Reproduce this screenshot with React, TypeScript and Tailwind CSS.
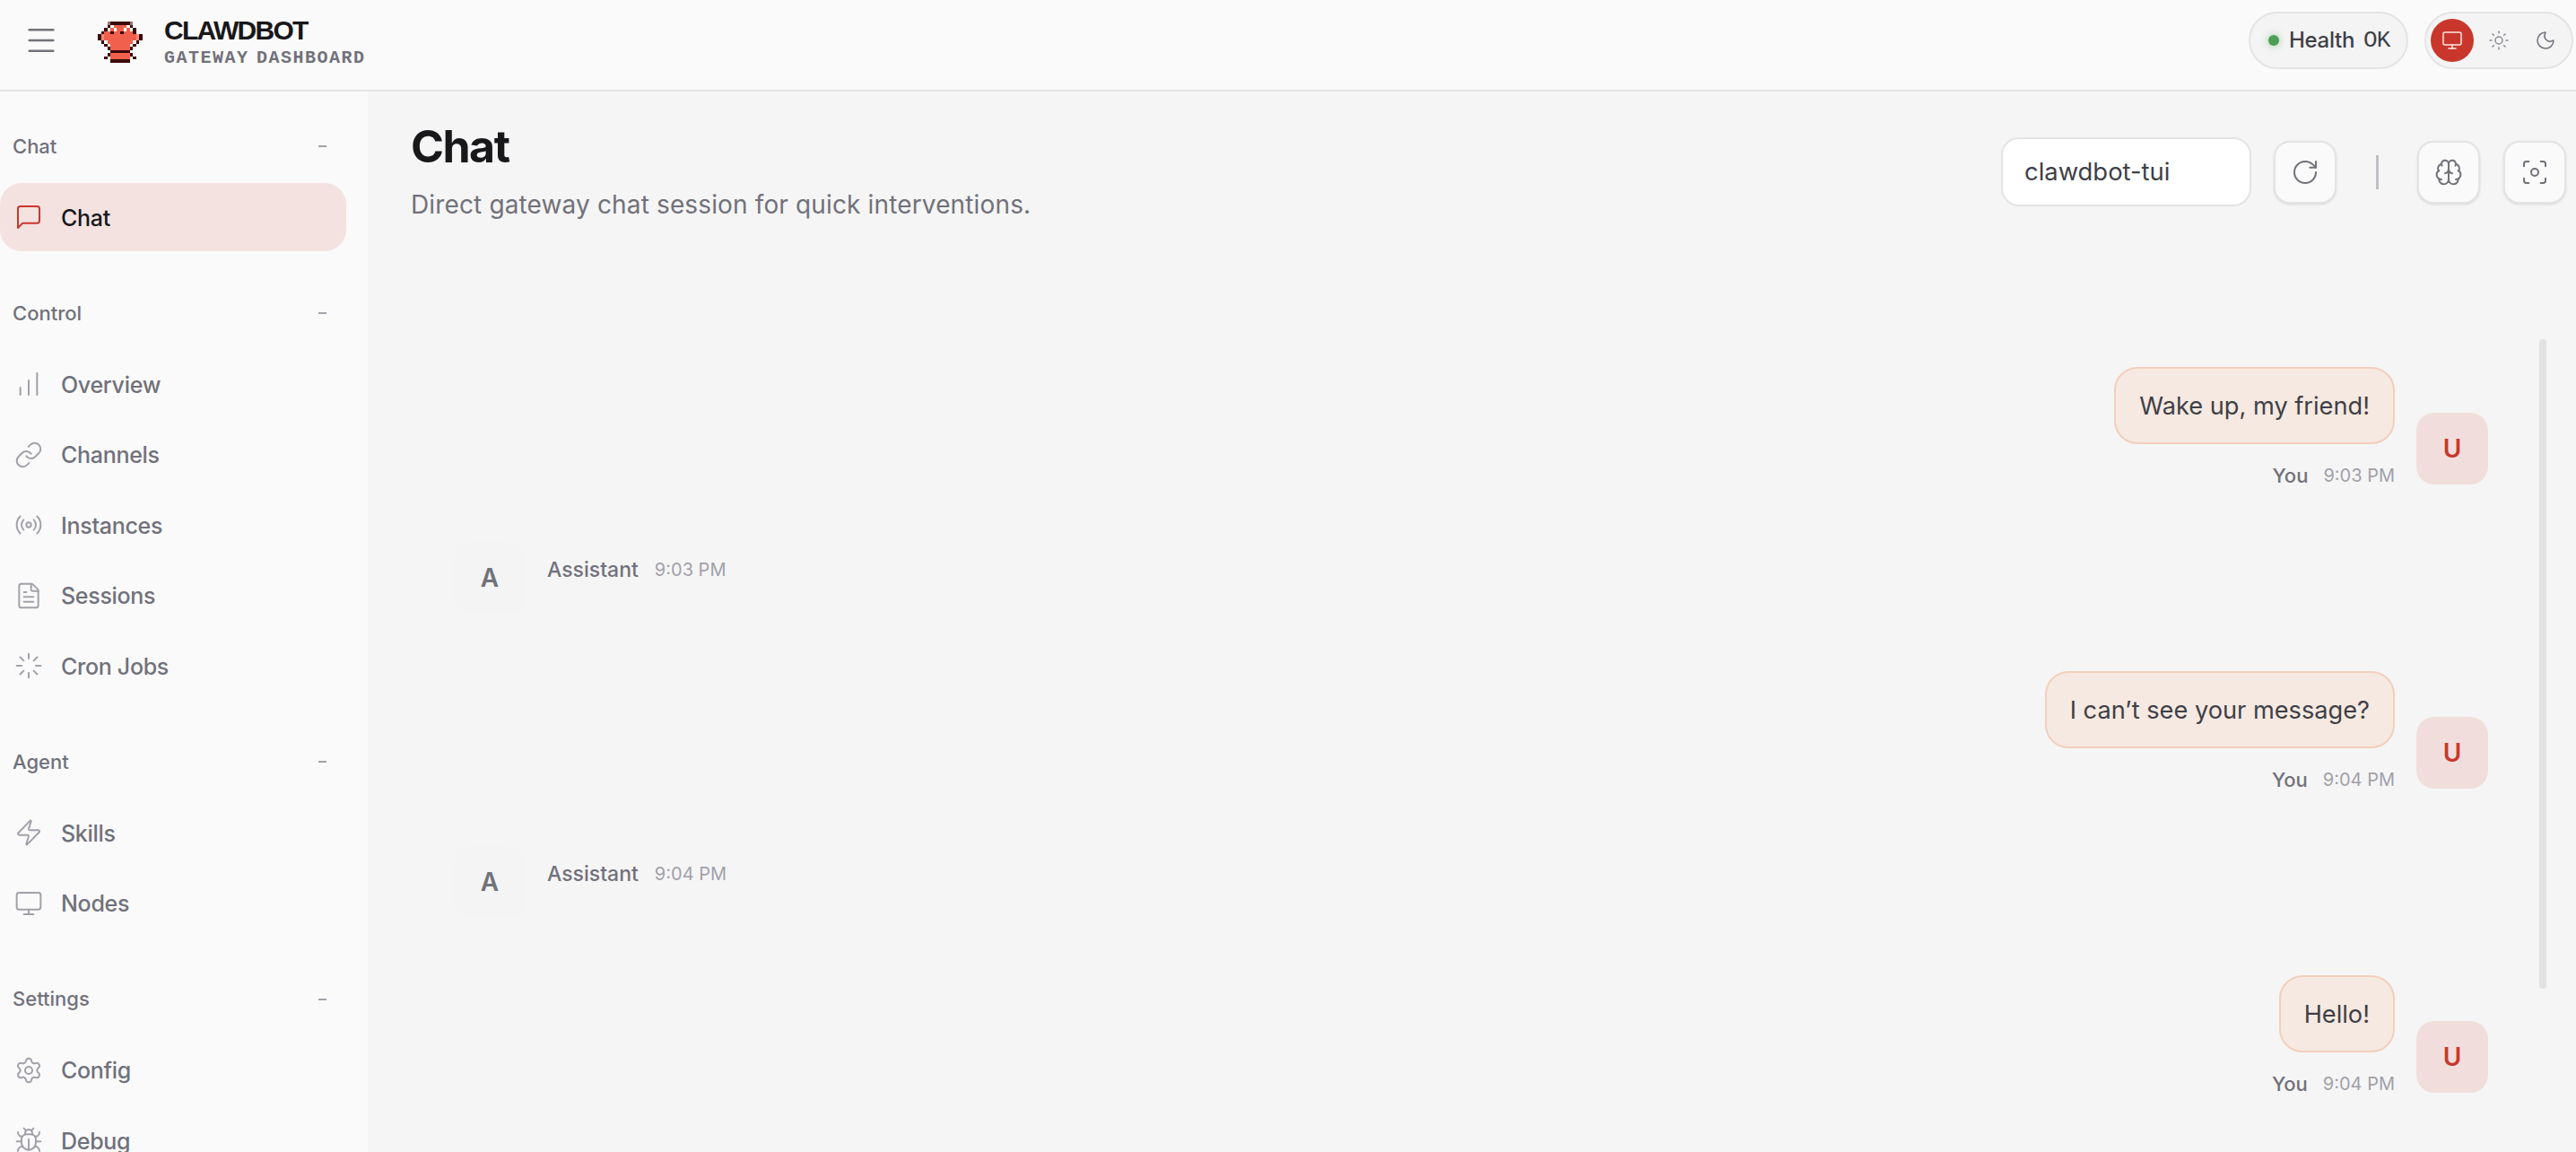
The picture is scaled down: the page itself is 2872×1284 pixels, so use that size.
import React from 'react';
import { Menu, Monitor, Sun, Moon, RotateCw, Brain, Focus, ChartNoAxesColumnIncreasing, Link, Radio, FileText, Loader, Zap, Settings, Bug } from 'lucide-react';

const GRID = [
  '...gddddddg...',
  '...dwccccwd...',
  '..dwcwccwcwd..',
  '.dccdccdcccd..',
  'dlccccccccccld',
  'dlccccccccccld',
  '.dwccccccccwd.',
  '..dwccccccwd..',
  '...dccccccd...',
  '....dddddd....',
  '...dccccccd...',
  '..dwccccccwd..',
  '....dddddd....',
];
const COLORS: Record<string, string> = { d: '#3a0a0a', c: '#f0604c', l: '#f58a76', w: '#ffffff', g: '#9a7a78' };

function Logo() {
  return (
    <svg width="50" height="46" viewBox="0 0 14 13" shapeRendering="crispEdges" className="shrink-0">
      {GRID.flatMap((row, y) =>
        row.split('').map((ch, x) =>
          ch === '.' ? null : <rect key={`${x}-${y}`} x={x} y={y} width="1" height="1" fill={COLORS[ch]} />
        )
      )}
    </svg>
  );
}

function OldChat() {
  return (
    <svg width="32" height="32" viewBox="0 0 24 24" fill="none" stroke="#c9372c" strokeWidth="1.5" strokeLinecap="round" strokeLinejoin="round" className="shrink-0">
      <path d="M21 15a2 2 0 0 1-2 2H7l-4 4V5a2 2 0 0 1 2-2h14a2 2 0 0 1 2 2z" />
    </svg>
  );
}

function Group({ label, children }: { label: string; children: React.ReactNode }) {
  return (
    <div className="flex flex-col">
      <div className="mb-[25px] flex h-8 items-center justify-between pl-[14px] pr-[46px] text-[22px] font-medium text-[#71717a]">
        <span>{label}</span>
        <span className="block h-[2px] w-[9px] bg-[#a1a1aa]" />
      </div>
      <div className="flex flex-col gap-[2.5px]">{children}</div>
    </div>
  );
}

function Item({ icon: Icon, label }: { icon: React.ComponentType<any>; label: string }) {
  return (
    <div className="flex h-[76px] w-[386px] shrink-0 items-center gap-5 pl-4 text-[25px] font-medium tracking-[-0.3px] text-[#71717a]">
      <Icon size={32} strokeWidth={1.5} className="shrink-0 text-[#a1a1aa]" />
      <span className="pt-[3px]">{label}</span>
    </div>
  );
}

function UserMsg({ text, time }: { text: string; time: string }) {
  return (
    <div className="flex items-end justify-end gap-6">
      <div className="flex flex-col items-end">
        <div className="flex h-[86px] items-center rounded-[26px] border-2 border-[#f3cfbc] bg-[#f5e9e1] px-[26px] pt-[2px] text-[27.2px] text-[#3f3f46]">
          {text}
        </div>
        <div className="mt-[25px] flex h-5 items-center gap-[17px]">
          <span className="text-[22px] font-medium text-[#71717a]">You</span>
          <span className="text-[20px] text-[#a1a1aa]">{time}</span>
        </div>
      </div>
      <div className="flex h-20 w-20 items-center justify-center rounded-[20px] bg-[#f1dedc] text-[28px] font-semibold text-[#c9372c]">U</div>
    </div>
  );
}

function BotMsg({ time }: { time: string }) {
  return (
    <div className="flex items-start gap-6">
      <div className="flex h-20 w-20 items-center justify-center rounded-[20px] bg-[#f4f4f4] text-[28px] font-semibold text-[#71717a]">A</div>
      <div className="mt-[21px] flex h-5 items-center gap-[18px]">
        <span className="text-[23px] font-medium text-[#71717a]">Assistant</span>
        <span className="text-[20px] text-[#a1a1aa]">{time}</span>
      </div>
    </div>
  );
}

function IconBtn({ icon: Icon }: { icon: React.ComponentType<any> }) {
  return (
    <button className="flex h-[70px] w-[70px] items-center justify-center rounded-[18px] border-2 border-[#e4e4e7] bg-[#fafafa] text-[#71717a] shadow-sm">
      <Icon size={32} strokeWidth={1.5} />
    </button>
  );
}

export default function App() {
  return (
    <div className="flex h-screen w-screen flex-col overflow-hidden bg-[#f5f5f5] font-['Inter',sans-serif]">
      <header className="flex h-[102px] shrink-0 items-center justify-between border-b-2 border-[#e4e4e7] bg-[#fafafa] pb-[10px] pl-[26px] pr-[3px]">
        <div className="flex items-center">
          <Menu size={40} strokeWidth={1.5} className="text-[#71717a]" />
          <div className="ml-[43px] mt-[4px]"><Logo /></div>
          <div className="ml-6 mt-[3px] flex flex-col">
            <span className="font-['Liberation_Sans',sans-serif] text-[30px] font-bold leading-[34px] tracking-[-1.7px] text-[#18181b]">CLAWDBOT</span>
            <span className="mt-[2px] font-['Liberation_Mono',monospace] text-[20px] font-bold leading-6 tracking-[1.5px] [word-spacing:-5px] text-[#71717a]">GATEWAY DASHBOARD</span>
          </div>
        </div>
        <div className="flex items-center gap-[18px]">
          <div className="flex h-16 w-[178px] items-center rounded-full border-2 border-[#e4e4e7] bg-[#f4f4f5] pl-[20px] text-[24px] font-medium text-[#3f3f46]">
            <span className="h-3 w-3 rounded-full bg-[#4a9f55] shadow-[0_0_8px_rgba(74,159,85,0.5)]" />
            <span className="ml-[11px] tracking-[-0.3px]">Health</span>
            <span className="ml-[10px] font-['Liberation_Mono',monospace] text-[26px] tracking-[-1px]">OK</span>
          </div>
          <div className="flex h-16 w-[166px] items-center rounded-full border-2 border-[#e4e4e7] bg-[#f4f4f5] pl-[5px]">
            <div className="flex h-12 w-12 items-center justify-center rounded-full bg-[#c9372c] text-[#fde8e4]"><Monitor size={24} strokeWidth={1.5} /></div>
            <div className="flex h-12 w-[56px] items-center justify-center text-[#8a8a93]"><Sun size={24} strokeWidth={1.5} /></div>
            <div className="flex h-12 w-[48px] items-center justify-center text-[#71717a]"><Moon size={24} strokeWidth={1.5} /></div>
          </div>
        </div>
      </header>
      <div className="flex min-h-0 flex-1">
        <aside className="flex w-[410px] shrink-0 flex-col gap-[53px] overflow-hidden bg-[#fafafa] pt-[45px]">
          <Group label="Chat">
            <div className="flex h-[76px] w-[386px] shrink-0 items-center gap-5 rounded-[24px] bg-[#f4e2e1] pl-4 text-[25px] font-medium tracking-[-0.3px] text-[#18181b]">
              <OldChat />
              <span className="pt-[3px]">Chat</span>
            </div>
          </Group>
          <Group label="Control">
            <Item icon={ChartNoAxesColumnIncreasing} label="Overview" />
            <Item icon={Link} label="Channels" />
            <Item icon={Radio} label="Instances" />
            <Item icon={FileText} label="Sessions" />
            <Item icon={Loader} label="Cron Jobs" />
          </Group>
          <Group label="Agent">
            <Item icon={Zap} label="Skills" />
            <Item icon={Monitor} label="Nodes" />
          </Group>
          <Group label="Settings">
            <Item icon={Settings} label="Config" />
            <Item icon={Bug} label="Debug" />
          </Group>
        </aside>
        <main className="flex min-w-0 flex-1 flex-col">
          <div className="flex items-start justify-between pl-12 pr-[11px] pt-[31px]">
            <div className="flex flex-col">
              <h1 className="text-[50px] font-bold leading-[60px] tracking-[-1.5px] text-[#18181b]">Chat</h1>
              <p className="mt-[17px] text-[28px] leading-9 tracking-[0.14px] text-[#71717a]">Direct gateway chat session for quick interventions.</p>
            </div>
            <div className="mt-[20px] flex items-center">
              <div className="flex h-[77px] w-[279px] items-center rounded-[20px] border-2 border-[#e4e4e7] bg-white pl-[24px] text-[27.4px] text-[#3f3f46]">clawdbot-tui</div>
              <div className="ml-[25px]"><IconBtn icon={RotateCw} /></div>
              <div className="ml-[44px] h-[38px] w-[3px] bg-[#bfc0c7]" />
              <div className="ml-[43px]"><IconBtn icon={Brain} /></div>
              <div className="ml-[26px]"><IconBtn icon={Focus} /></div>
            </div>
          </div>
          <div className="relative flex min-h-0 flex-1 flex-col gap-16 pl-[96px] pr-[98px] pt-[163px]">
            <UserMsg text="Wake up, my friend!" time="9:03 PM" />
            <BotMsg time="9:03 PM" />
            <UserMsg text="I can’t see your message?" time="9:04 PM" />
            <BotMsg time="9:04 PM" />
            <UserMsg text="Hello!" time="9:04 PM" />
            <div className="absolute right-[33px] top-[132px] h-[724px] w-2 rounded-full bg-[#e2e2e4]" />
          </div>
        </main>
      </div>
    </div>
  );
}
